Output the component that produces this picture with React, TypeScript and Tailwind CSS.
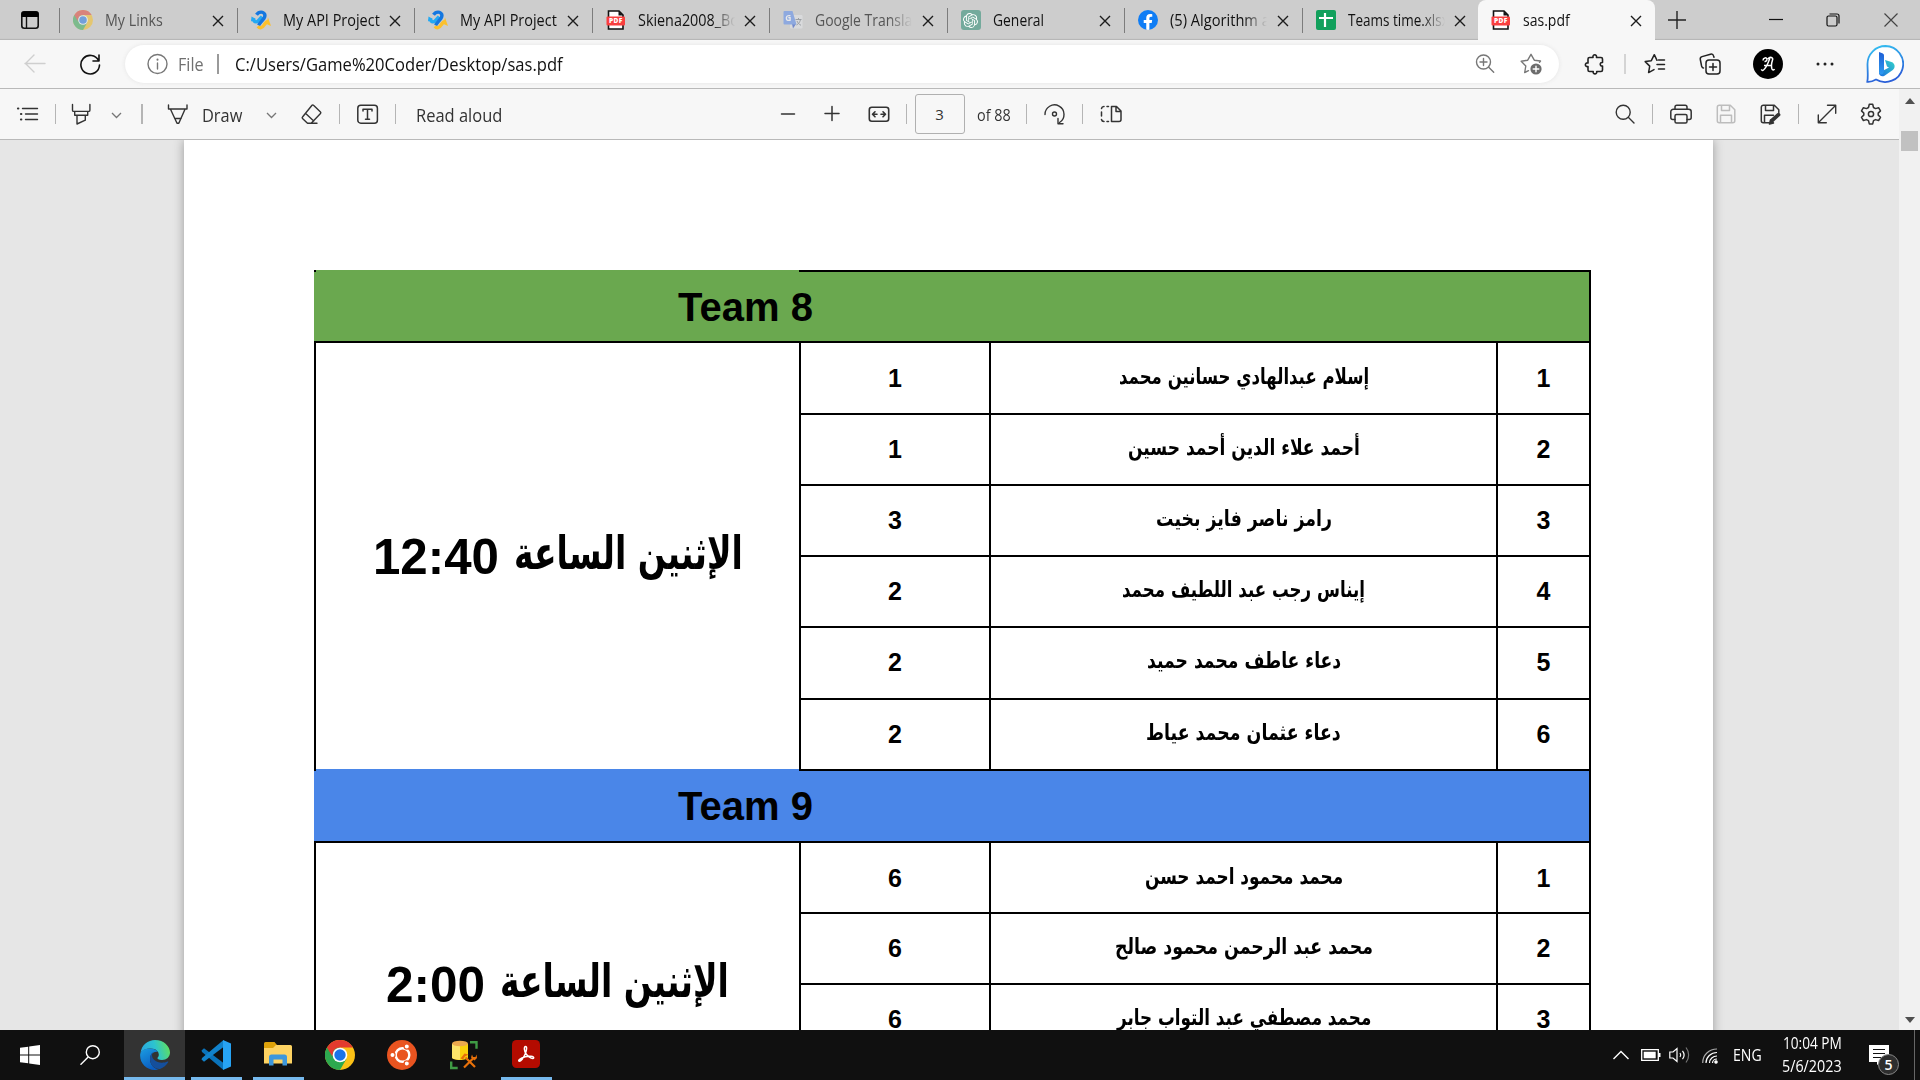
import React, { useLayoutEffect, useRef, useState, type ReactNode } from "react";
import { FaFacebookF } from "react-icons/fa";
import { SiOpenai } from "react-icons/si";

/** Text on one line, condensed or stretched to an exact advance width. */
function Fit({ w, className = "", children }: { w: number; className?: string; children: ReactNode }) {
  const ref = useRef<HTMLSpanElement>(null);
  const [k, setK] = useState(1);
  useLayoutEffect(() => {
    if (ref.current) setK(w / ref.current.offsetWidth);
  }, [w]);
  return (
    <span dir="ltr" className="block shrink-0" style={{ width: w }}>
      <span ref={ref} className={`block w-max origin-left whitespace-nowrap ${className}`} style={{ transform: `scaleX(${k})` }}>
        {children}
      </span>
    </span>
  );
}

function Ico({ children, className = "", sw = 1.3 }: { children: ReactNode; className?: string; sw?: number }) {
  return (
    <svg
      viewBox="0 0 24 24"
      fill="none"
      stroke="currentColor"
      strokeWidth={sw}
      strokeLinecap="round"
      strokeLinejoin="round"
      className={`size-6 shrink-0 ${className}`}
    >
      {children}
    </svg>
  );
}

const Sep = ({ className = "" }: { className?: string }) => <div className={`h-5 w-px shrink-0 bg-[#b5b5b5] ${className}`} />;

const Chevron = ({ className = "" }: { className?: string }) => (
  <svg viewBox="0 0 16 16" fill="none" stroke="#767676" strokeWidth="1.3" className={`size-4 shrink-0 ${className}`}>
    <path d="M3 7 7.500 11.500 12 7" />
  </svg>
);

/* ---------- favicons ---------- */

const ChromeLogo = ({ className = "" }: { className?: string }) => (
  <svg viewBox="0 0 30 30" className={className}>
    <circle cx="15" cy="15" r="15" fill="#fbc116" />
    <path d="M2 7.500A15 15 0 0 0 15 30l6.500-11.250L15 15z" fill="#2da94f" />
    <path d="M2 7.500 8.500 18.750 15 15V7.500z" fill="#2da94f" />
    <path d="M2 7.500A15 15 0 0 1 28 7.500H15a7.500 7.500 0 0 0-6.700 4.200L7.300 16.500z" fill="#e33b2e" />
    <circle cx="15" cy="15" r="7.300" fill="#fff" />
    <circle cx="15" cy="15" r="5.700" fill="#1a73e8" />
  </svg>
);

const ApiIcon = () => (
  <svg viewBox="0 0 20 20" fill="none" strokeWidth="3.400" className="size-5">
    <path d="M6.800 16.300c2.200 2.300 4.400 1.600 6.200-1.200 1.400-2.300 2.500-3.700 4.700-3.600" stroke="#fbc02d" />
    <path d="M17 7.500 20 16l-4.500-2z" fill="#fbc02d" />
    <path d="M2 9c1.500 3.600 4 3.700 6.200.8L11 6.500" stroke="#22a9f4" />
    <path d="M0 11.500.5 6.500 5 9z" fill="#22a9f4" />
    <path d="M5.500 4.800C8 1 12.500 1.500 13.800 4.500c.9 2.800-1.300 4.500-3.300 6.800-1.300 1.500-2.300 2.700-2.900 4" stroke="#1477e0" />
  </svg>
);

const PdfIcon = () => (
  <svg viewBox="0 0 20 20" className="size-5">
    <path d="M2.500 1h10.500l4 4v14h-14.500z" fill="#fff" stroke="#111" strokeWidth="1.600" />
    <path d="M12.500 1v4.500h4.500z" fill="#111" />
    <rect x="0.500" y="6.500" width="18.500" height="9" rx="1" fill="#f93f3f" />
    <text x="9.800" y="13.400" textAnchor="middle" fontFamily="Open Sans" fontWeight="800" fontSize="6.600" letterSpacing="0.300" fill="#fff">PDF</text>
  </svg>
);

const TranslateIcon = () => (
  <svg viewBox="0 0 20 20" className="size-5 opacity-55">
    <rect x="7" y="5" width="12.500" height="13.500" rx="1.200" fill="#e4e6ea" />
    <path d="m9 14 4 0-3 4.500z" fill="#2f55c8" />
    <path d="M1.500 1h8l4 13.500H1.500A1 1 0 0 1 .5 13.500V2a1 1 0 0 1 1-1z" fill="#5b8def" />
    <text x="2.300" y="10.500" fontFamily="Open Sans" fontWeight="700" fontSize="8.500" fill="#fff">G</text>
    <path d="M12.500 9.500h6M15.500 8v1.500M17.500 9.500c-.5 2.500-2 4.500-4 5.500M14 11c.8 2 2 3.200 4 4.300" stroke="#747a84" fill="none" />
  </svg>
);

const SheetsIcon = () => (
  <svg viewBox="0 0 20 20" className="size-5">
    <rect width="20" height="20" rx="2" fill="#12a05c" />
    <path d="M9 3v14M3 8h14" stroke="#fff" strokeWidth="2.200" />
  </svg>
);

const tabs: { icon: ReactNode; title: string; w: number; dim?: boolean }[] = [
  { icon: <ChromeLogo className="size-5 opacity-50" />, title: "My Links", w: 58, dim: true },
  { icon: <ApiIcon />, title: "My API Project", w: 97 },
  { icon: <ApiIcon />, title: "My API Project", w: 97 },
  { icon: <PdfIcon />, title: "Skiena2008_Bo", w: 101 },
  { icon: <TranslateIcon />, title: "Google Translate", w: 110, dim: true },
  {
    icon: (
      <div className="grid size-5 place-items-center rounded-[3px] bg-[#74aa9c] text-white">
        <SiOpenai size={15} />
      </div>
    ),
    title: "General",
    w: 51,
  },
  {
    icon: (
      <div className="flex size-5 items-end justify-center overflow-hidden rounded-full bg-[#0f7df5] text-white">
        <FaFacebookF size={16} />
      </div>
    ),
    title: "(5) Algorithm and",
    w: 118,
  },
  { icon: <SheetsIcon />, title: "Teams time.xlsx", w: 101 },
];

const CloseX = () => (
  <svg viewBox="0 0 12 12" className="size-3 shrink-0" stroke="#1c1c1c" strokeWidth="1.400">
    <path d="m1 1 10 10M11 1 1 11" />
  </svg>
);

function TabBar() {
  return (
    <div className="flex h-10 items-stretch bg-[#cdcdcd] shadow-[inset_0_-2px_1px_-1px_#b5b5b5]">
      <div className="ml-[18px] flex w-6 items-center">
        <svg viewBox="0 0 24 24" fill="none" className="size-6">
          <rect x="3.800" y="3.800" width="16.400" height="16.400" rx="2.500" stroke="#111" strokeWidth="1.600" />
          <path d="M3.500 5.500a2 2 0 0 1 2-2h13a2 2 0 0 1 2 2V9h-17z" fill="#000" />
          <path d="M8.500 9v11" stroke="#111" strokeWidth="1.400" />
        </svg>
      </div>
      <div className="ml-[17px] flex">
        {tabs.map((t, i) => (
          <div key={i} className="flex w-[177.500px] items-center">
            <div className="h-[25px] w-px bg-[#7c7c7c]" />
            <div className="ml-[13px] size-5 shrink-0">{t.icon}</div>
            <div className={`ml-3 w-[97px] overflow-hidden pb-px ${t.w > 98 ? "[mask-image:linear-gradient(to_right,black_76%,transparent_100%)]" : ""}`}>
              <Fit w={t.w} className={`text-[15.500px] leading-[22px] ${t.dim ? "text-[#555]" : "text-[#111]"}`}>{t.title}</Fit>
            </div>
            <div className="ml-[9.500px] pt-px"><CloseX /></div>
          </div>
        ))}
      </div>
      <div className="-ml-px flex w-[177px] items-center rounded-t-lg bg-[#f7f7f7]">
        <div className="ml-[13px] size-5"><PdfIcon /></div>
        <div className="ml-3 w-[97px] pb-px"><Fit w={47} className="text-[15.500px] leading-[22px] text-[#111]">sas.pdf</Fit></div>
        <div className="ml-[9.500px] pt-px"><CloseX /></div>
      </div>
      <svg viewBox="0 0 18 18" className="mt-[10.500px] ml-[13px] size-[18px]" stroke="#222" strokeWidth="1.400"><path d="M9 0v18M0 9h18" /></svg>
      <svg viewBox="0 0 14 14" className="mt-[13px] ml-[83px] size-[14px]" stroke="#111" strokeWidth="1.200"><path d="M0 6.500h14" /></svg>
      <svg viewBox="0 0 14 14" className="mt-[13px] ml-[43px] size-[14px]" fill="none" stroke="#111" strokeWidth="1.200">
        <rect x="1" y="3" width="10" height="10" rx="1.500" />
        <path d="M3.500 1H11a2 2 0 0 1 2 2v7.500" />
      </svg>
      <svg viewBox="0 0 14 14" className="mt-[13px] ml-[44px] size-[14px]" stroke="#444" strokeWidth="1.200"><path d="m.5.5 13 13M13.500.5l-13 13" /></svg>
    </div>
  );
}

function AddressBar() {
  return (
    <div className="flex h-[49px] items-center border-b border-[#b9b9b9] bg-[#f7f7f7] text-[#222]">
      <Ico className="ml-[23px] text-[#cfcfcf]" sw={1.400}><path d="M2 11.500h20M11 3 2.500 11.500l8.500 8.500" /></Ico>
      <Ico className="ml-[31px] text-[#111]" sw={1.600}><path d="M20.500 8.500A9.300 9.300 0 1 0 21.500 13M21 3v6h-6" /></Ico>
      <div className="ml-[23px] flex h-[38px] w-[1434px] items-center rounded-full bg-white shadow-[0_0_4px_#e4e4e4]">
        <Ico className="ml-[21px] text-[#777]" sw={1.400}>
          <circle cx="11.500" cy="12" r="9.500" /><path d="M11.500 11v6" /><path d="M11.500 7.500v.2" strokeWidth="2" />
        </Ico>
        <div className="ml-2 pb-px"><Fit w={26} className="text-[18px] leading-6 text-[#707070]">File</Fit></div>
        <div className="ml-[13px] h-5 w-[2px] bg-[#9a9a9a]" />
        <div className="ml-4 pb-px"><Fit w={328} className="text-[18px] leading-6 text-[#111]">C:/Users/Game%20Coder/Desktop/sas.pdf</Fit></div>
        <Ico className="ml-auto text-[#777]" sw={1.400}><circle cx="10.500" cy="10" r="7" /><path d="m15.700 15.300 5 5M7 10h7M10.500 6.500v7" /></Ico>
        <Ico className="mr-4 ml-[22px] text-[#777]" sw={1.400}>
          <path d="M20.500 10.200l1-1.200-6.200-.8L12 2.300 8.700 8.200 2.200 9.300l4.600 4.700L5.700 20.500 9.500 18.700" />
          <circle cx="17" cy="17" r="5.600" fill="#6c6c6c" stroke="none" />
          <path d="M17 14.200v5.600M14.200 17h5.600" stroke="#fff" />
        </Ico>
      </div>
      <Ico className="ml-6" sw={1.600}>
        <path d="M5 7a1.500 1.500 0 0 1 1.500-1.500H10c-.8-3.600 4.300-3.600 3.500 0H18a1.500 1.500 0 0 1 1.500 1.500v3.500c-3-.7-3 4.200 0 3.500V18a1.500 1.500 0 0 1-1.500 1.500h-4.300c.7 3.200-4.200 3.200-3.500 0H6.500A1.500 1.500 0 0 1 5 18v-3.500c-3.500.8-3.500-4.300 0-3.500z" />
      </Ico>
      <div className="ml-[17px] h-5 w-[2px] bg-[#d4d4d4]" />
      <Ico className="ml-[17px]" sw={1.500}>
        <path d="M14 8.300 11.300 2.700 8.300 8.700 2.200 9.600l4.500 4.500-1.100 6.500 5.400-3M15.500 8H21.500M14 12.500h7.500M15.500 17h6" />
      </Ico>
      <Ico className="ml-[31px]" sw={1.500}>
        <rect x="8" y="8" width="14" height="14" rx="3" /><path d="M15 11.500v7M11.500 15h7" />
        <path d="M5.500 16c-1.300 0-1.500-.8-1.900-2L2.300 7.500c-.3-1.600.4-2.500 1.700-2.900l8.500-2.400c1.500-.4 2.700.3 3.100 1.800l.4 1.300" />
      </Ico>
      <div className="ml-[31px] flex size-[30px] items-center justify-center rounded-full bg-black">
        <svg viewBox="0 0 16 16" className="size-4" fill="none" stroke="#fff" strokeWidth="1.500">
          <path d="M3 4.500C3 1.500 7 1 7 3.300S4.500 5.500 4.500 5.500M8 3c2-3 5.500-1.500 4.500 1-1 3-1.500 6-.5 9 .6 1.500 2 1 2.500 0M10 2C8.500 6 6.500 12 3.500 14c-1 .8-2 .3-2-.7M4 9.500h8" />
        </svg>
      </div>
      <svg viewBox="0 0 24 24" className="ml-[30px] size-6" fill="#222"><circle cx="5" cy="12" r="1.500" /><circle cx="12" cy="12" r="1.500" /><circle cx="19" cy="12" r="1.500" /></svg>
      <svg viewBox="0 0 38 38" className="ml-[29px] size-[38px]">
        <defs>
          <linearGradient id="bubble" x1="0" y1="0" x2="0.300" y2="1"><stop stopColor="#35c5f2" /><stop offset="1" stopColor="#2a5fd8" /></linearGradient>
          <linearGradient id="bstem" x1="0" y1="0" x2="0" y2="1"><stop stopColor="#1f5fd6" /><stop offset="1" stopColor="#2b9af0" /></linearGradient>
          <linearGradient id="bbowl" x1="1" y1="0" x2="0" y2="1"><stop stopColor="#33d3c8" /><stop offset="1" stopColor="#1b6fe0" /></linearGradient>
        </defs>
        <path d="M19.500 1A18 18 0 1 1 10 34.500C7 36.300 4 37 1.300 36.800 2.300 33 1.500 25 1.500 19A18 18 0 0 1 19.500 1z" fill="#fff" stroke="url(#bubble)" strokeWidth="1.800" />
        <path d="m19 15 6.500 2c3.500 1.200 4.300 5.800 1.300 8L18.500 30.800c-2.800 1.500-5.500-.3-5.500-3l10-5.300-2-1z" fill="url(#bbowl)" />
        <path d="m13 7 3.300 1.200c1.300.5 1.700 1.200 1.700 2.300v15c0 3-2 4.500-3.500 3.800-1-.5-1.500-1.300-1.500-2.300z" fill="url(#bstem)" />
      </svg>
    </div>
  );
}

function PdfToolbar() {
  return (
    <div className="flex h-[51px] items-center border-b border-[#b9b9b9] bg-[#f7f7f7] text-[#333]">
      <Ico className="ml-[15px]" sw={1.400}>
        <path d="M7.500 6.500H22.500M10.500 12H22.500M10.500 17.500H22.500" />
        <path d="M3 6.500h.3M6 12h.3M6 17.500h.3" strokeWidth="2.200" />
      </Ico>
      <Sep className="ml-4" />
      <Ico className="ml-[13px]" sw={1.400}><path d="M3.500 2.500v5.700c0 .8.400 1.200 1.200 1.200h15c.8 0 1.200-.4 1.200-1.200V2.500M5.700 9.500v3.800h13V9.500M8 13.500v8.500l8.300-3.800v-4.700" /></Ico>
      <Chevron className="ml-4" />
      <div className="ml-4 h-5 w-[2px] bg-[#b5b5b5]" />
      <Ico className="ml-[23px]" sw={1.400}><path d="M2.500 3v4h18.500V3M4.500 7.200 11 21.300h1.800L19 7.200M8.700 16.500h6.500" /></Ico>
      <div className="ml-3 pt-px"><Fit w={40} className="text-[18px] leading-6">Draw</Fit></div>
      <Chevron className="ml-[22px]" />
      <Ico className="ml-5" sw={1.400}><path d="m13.500 3.300 7 6.700a1 1 0 0 1 0 1.400L11.200 21.300H7.500l-5-4.900a1 1 0 0 1 0-1.400L12 3.300a1 1 0 0 1 1.500 0zM5.700 11.500l8 7.500M7.500 21.300h9.500" /></Ico>
      <Sep className="ml-[15px]" />
      <Ico className="ml-4" sw={1.500}><rect x="1.800" y="3.200" width="19.600" height="18" rx="3" /><path d="M7 9V7.200h9V9M11.500 7.200v10M9.500 17.200h4" /></Ico>
      <Sep className="ml-[15px]" />
      <div className="ml-5 pt-px"><Fit w={86} className="text-[18px] leading-6">Read aloud</Fit></div>

      <Ico className="ml-[274px]" sw={1.500}><path d="M5.500 12h13" /></Ico>
      <Ico className="ml-5" sw={1.500}><path d="M5 11.500h14M12 4.500v14" /></Ico>
      <Ico className="ml-[23px]" sw={1.600}><rect x="2.300" y="5.300" width="19.400" height="14" rx="2.500" /><path d="M10 12.300H5.800M8 9.800l-2.500 2.500L8 14.800M14 12.300h4.200M16 9.800l2.500 2.500-2.500 2.500" /></Ico>
      <Sep className="ml-[15px]" />
      <div className="ml-2 flex h-10 w-[50px] items-center justify-center rounded-[3px] border border-[#b0b0b0] pt-px pr-px text-[15px]">3</div>
      <div className="ml-3 pt-px"><Fit w={34} className="text-[16.500px] leading-6">of 88</Fit></div>
      <Sep className="ml-[15px]" />
      <Ico className="ml-4" sw={1.400}><path d="M2 12.500a9.500 9.500 0 1 1 14.500 8M15 16.500v5.300h5" /><circle cx="11.500" cy="12" r="2" /></Ico>
      <Sep className="ml-[15px]" />
      <Ico className="ml-4" sw={1.500}>
        <path d="M12.500 4.500h5l4.500 4.500v8.500a2 2 0 0 1-2 2h-7.500zM17 4.800v4.700h4.700" />
        <path d="M9.500 4.500H8M5 4.500a2.500 2.500 0 0 0-2.500 2M2.500 10v4M2.500 17.500a2.500 2.500 0 0 0 2.500 2M8 19.500h1.500" />
      </Ico>

      <Ico className="ml-[489.500px]" sw={1.400}><circle cx="10.200" cy="10.200" r="7" /><path d="m15.500 15.500 5.500 5.500" /></Ico>
      <Sep className="ml-[15.500px]" />
      <Ico className="ml-[15.500px]" sw={1.500}>
        <path d="M6 7V5a1.800 1.800 0 0 1 1.800-1.800h8.400A1.800 1.800 0 0 1 18 5v2M6 17.500H3.800a2 2 0 0 1-2-2V9.800a2.500 2.500 0 0 1 2.500-2.500h15.400a2.500 2.500 0 0 1 2.500 2.500v5.700a2 2 0 0 1-2 2H18" />
        <rect x="6" y="12.500" width="12" height="8.500" rx="1.500" />
      </Ico>
      <Ico className="ml-[21px] text-[#bdbdbd]" sw={1.500}>
        <path d="M3.300 5.300a2 2 0 0 1 2-2h11l4.500 4.500v11a2 2 0 0 1-2 2H5.300a2 2 0 0 1-2-2zM7.500 3.500v5h8v-5M6.500 20.500v-7.300h11v7.300" />
      </Ico>
      <Ico className="ml-5" sw={1.500}>
        <path d="M11 20.800H5.300a2 2 0 0 1-2-2V5.300a2 2 0 0 1 2-2h11l4.500 4.500v2.700M7.500 3.500v5h8v-5M6.500 20.500v-7.300h9" />
        <path d="m14 18.500 6.500-5.800" strokeWidth="3.800" /><path d="m11.500 22 1-4 3 3z" fill="currentColor" />
      </Ico>
      <Sep className="ml-4" />
      <Ico className="ml-4" sw={1.400}><path d="M3.500 20.500 20.500 3.500M12.500 3.300h8.200v8M3.300 13v7.700h8" /></Ico>
      <Ico className="ml-[20.500px]" sw={1.500}>
        <path d="M10.300 2.300h3.400l.8 3.200 2 1.100 3.100-.9 1.900 3.200-2.300 2.200v2l2.300 2.200-1.900 3.200-3.100-.9-2 1.100-.8 3.200h-3.400l-.8-3.200-2-1.100-3.100.9-1.900-3.200 2.300-2.200v-2L2.500 8.900l1.900-3.200 3.100.9 2-1.100z" />
        <circle cx="12" cy="12" r="2.600" />
      </Ico>
    </div>
  );
}

/* ---------- document ---------- */

type Row = { n: number; name: string; w: number; level: number };

const team8: Row[] = [
  { n: 1, name: "إسلام عبدالهادي حسانين محمد", w: 250, level: 1 },
  { n: 2, name: "أحمد علاء الدين أحمد حسين", w: 232, level: 1 },
  { n: 3, name: "رامز ناصر فايز بخيت", w: 176, level: 3 },
  { n: 4, name: "إيناس رجب عبد اللطيف محمد", w: 243, level: 2 },
  { n: 5, name: "دعاء عاطف محمد حميد", w: 194, level: 2 },
  { n: 6, name: "دعاء عثمان محمد عياط", w: 195, level: 2 },
];

const team9: Row[] = [
  { n: 1, name: "محمد محمود احمد حسن", w: 198, level: 6 },
  { n: 2, name: "محمد عبد الرحمن محمود صالح", w: 258, level: 6 },
  { n: 3, name: "محمد مصطفي عبد التواب جابر", w: 254, level: 6 },
];

function TeamHeader({ title, color }: { title: string; color: string }) {
  return (
    <div className={`flex ${color}`}>
      <div className="h-[2px] w-[2px] bg-black" />
      <div className="w-[483px]" />
      <div className="relative flex-1 border-t-2 border-r-2 border-black">
        <div className="absolute top-[11px] -left-[121px] text-[40px] leading-[48px] font-bold whitespace-nowrap">{title}</div>
      </div>
    </div>
  );
}

function Team({ rows, time, timeWidth, digitsWidth, sizes, timePad }: { rows: Row[]; time: string; timeWidth: number; digitsWidth: number; sizes: string; timePad: string }) {
  return (
    <div className="flex border-t-2 border-black">
      <div className={`flex w-[485px] justify-center border-l-2 border-black ${timePad}`}>
        <div className="flex h-[60px] items-start gap-[15px]">
          <Fit w={digitsWidth} className="text-[50px] leading-[60px] font-bold">{time}</Fit>
          <Fit w={timeWidth} className="font-['DejaVu_Sans'] text-[46px] leading-[53px] font-bold">
            <bdi dir="rtl">الإثنين الساعة</bdi>
          </Fit>
        </div>
      </div>
      <div className={`grid grid-cols-[190px_507px_95px] ${sizes}`}>
        {rows.map((r, i) => {
          const line = i > 0 ? "border-t-2" : "pt-[21px]";
          return (
            <React.Fragment key={r.n}>
              <div className={`border-l-2 border-black pt-5 text-center text-[25px] leading-[28px] font-bold ${line}`}>{r.level}</div>
              <div className={`flex justify-center border-l-2 border-black pt-5 ${line}`}>
                <Fit w={r.w} className="font-['DejaVu_Sans'] text-[22px] leading-[26px] font-bold">
                  <bdi dir="rtl">{r.name}</bdi>
                </Fit>
              </div>
              <div className={`border-x-2 border-black pt-5 text-center text-[25px] leading-[28px] font-bold ${line}`}>{r.n}</div>
            </React.Fragment>
          );
        })}
      </div>
    </div>
  );
}

function Document() {
  return (
    <div className="flex min-h-0 flex-1 justify-start overflow-hidden bg-[#e6e6e6] pl-[184px]">
      <div className="h-[1400px] w-[1529px] shrink-0 bg-white pt-[130px] pl-[130px] font-['Liberation_Sans'] text-black shadow-[0_0_10px_#9a9a9a]">
        <div className="w-[1277px]">
          <div className="grid h-[71px]"><TeamHeader title="Team 8" color="bg-[#6aa84f]" /></div>
          <Team rows={team8} time="12:40" timeWidth={229} digitsWidth={126} timePad="pt-[184px]" sizes="grid-rows-[70px_71px_71px_71px_72px_71px]" />
          <div className="grid h-[72px]"><TeamHeader title="Team 9" color="bg-[#4a86e8]" /></div>
          <Team rows={team9} time="2:00" timeWidth={229} digitsWidth={99} timePad="pt-[112px]" sizes="grid-rows-[69px_71px_71px]" />
        </div>
      </div>
    </div>
  );
}

/* ---------- taskbar ---------- */

const EdgeLogo = () => (
  <svg viewBox="0 0 30 30" className="size-[30px]">
    <defs>
      <linearGradient id="e1" x1="0" y1="0.500" x2="1" y2="0.300"><stop stopColor="#2aa5e0" /><stop offset="0.500" stopColor="#2cc3d0" /><stop offset="1" stopColor="#62e05a" /></linearGradient>
      <linearGradient id="e2" x1="0" y1="0" x2="0.500" y2="1"><stop stopColor="#1b9de2" /><stop offset="1" stopColor="#0a5cc0" /></linearGradient>
    </defs>
    <path d="M.5 13C1.500 5 8 0 15 0c9 0 15 6.500 15 12.500 0 4.500-3.500 7.500-8 7.500-3.500 0-5-1.300-4.500-2.200 1-1 1.300-2 1.300-3.300 0-3-3-6-8-6C6 8.500 2 10.500.5 13z" fill="url(#e1)" />
    <path d="M.2 14C1 10.500 5 8.500 10.500 8.500c3.500 0 6 1.500 7.500 3.500-4-1-8 2-8 7 0 6 4.500 10 9 10.500C8 32-.8 24 .2 14z" fill="url(#e2)" />
    <path d="M13 12c-2 1.500-3 4-3 7 0 6 5 10.500 10 10 3.500-1.200 6.500-4 8.200-6.700.4-.7-.2-1-.8-.7-1.500.8-3.500 1.200-5.500 1.200-6 0-9.900-4-9.900-7.500 0-1.200.3-2.300 1-3.300z" fill="#154f9c" />
  </svg>
);

const CodeLogo = () => (
  <svg viewBox="0 0 30 30" className="size-[30px]">
    <path d="m.5 10.500 2.500-2.200L22.500 23v7L1 12z" fill="#0a73bb" />
    <path d="m.5 19.500 2.500 2.200L22.500 7V0L1 18z" fill="#1182cb" />
    <path d="M22 0 30 3.500v23L22 30z" fill="#27a3f3" />
  </svg>
);

const FolderLogo = () => (
  <svg viewBox="0 0 28 28" className="size-7">
    <path d="M0 3.500A1.500 1.500 0 0 1 1.500 2h9l2.500 3v6H0z" fill="#dea20a" />
    <path d="M0 8h9l3-3h14.500A1.500 1.500 0 0 1 28 6.500v17H0z" fill="#fdd363" />
    <path d="M5 25.500V17a2.500 2.500 0 0 1 2.500-2.500h13A2.500 2.500 0 0 1 23 17v8.500h-4.500v-6h-9v6z" fill="#3d97dc" />
  </svg>
);

const UbuntuLogo = () => (
  <svg viewBox="0 0 30 30" className="size-[30px]">
    <circle cx="15" cy="15" r="15" fill="#e95420" />
    <circle cx="15.500" cy="15" r="6.800" fill="none" stroke="#fff" strokeWidth="2.400" />
    <g fill="#fff" stroke="#e95420" strokeWidth="1.200">
      <circle cx="5.500" cy="15" r="2.600" /><circle cx="19.800" cy="6.500" r="2.600" /><circle cx="19.800" cy="23.500" r="2.600" />
    </g>
  </svg>
);

const DbToolLogo = () => (
  <svg viewBox="0 0 30 30" className="size-[30px]">
    <path d="M3 4v13.500c0 1.500 3.500 2.500 8 2.500s8-1 8-2.500V4z" fill="#fbd20c" />
    <path d="M3 4v13.500c0 1 3 2.200 8 2.300V4z" fill="#fde46a" />
    <ellipse cx="11" cy="3.500" rx="8" ry="2.800" fill="#eda94e" />
    <path d="M21 2.200h6.500v6.500M2.200 21.500V28h6.500" fill="none" stroke="#3f9b45" strokeWidth="2.400" />
    <path d="m15 27.500 9.500-9.500M16.500 17.500l9.500 9.500" stroke="#e8710a" strokeWidth="2.200" />
    <path d="m11.500 18.500 4-5 4 1-3.500 2-2 3zM22 17.500l1-3 1 2.500h2.500l1-2.500.5 3.500-2.500 2.500z" fill="#e8710a" />
  </svg>
);

const AcrobatLogo = () => (
  <svg viewBox="0 0 28 28" className="size-7">
    <rect width="28" height="28" rx="4.500" fill="#b30b00" />
    <path d="M13.500 6.500c1.700 0 1.300 3.500-.3 7.500s-4.500 7.500-6 7.200c-1.800-.8 2-3.400 6-4.400s8.500-.6 8.500 1c0 1.800-4.500.2-7.200-3.300s-2.600-8-1-8z" fill="none" stroke="#fff" strokeWidth="1.500" />
  </svg>
);

function Task({ icon, bar = "", tile = "" }: { icon: ReactNode; bar?: string; tile?: string }) {
  return (
    <div className={`flex h-[50px] shrink-0 flex-col items-center ${tile || "w-[62px]"}`}>
      <div className="flex w-full flex-1 items-center justify-center">{icon}</div>
      <div className={`h-[3px] ${bar}`} />
    </div>
  );
}

function Taskbar() {
  return (
    <div className="flex h-[50px] shrink-0 items-center bg-[#101010] text-white">
      <svg viewBox="0 0 20 20" className="ml-5 size-5" fill="#fff"><path d="M0 2.800 8.200 1.700v7.800H0zM9.200 1.500 20 0v9.500H9.200zM0 10.500h8.200v7.800L0 17.200zM9.200 10.500H20V20L9.200 18.500z" /></svg>
      <svg viewBox="0 0 20 20" className="ml-10 size-5" fill="none" stroke="#fff" strokeWidth="1.400"><circle cx="12.800" cy="7.200" r="6.500" /><path d="M8.200 12 .5 19.700" /></svg>
      <div className="ml-6 flex">
        <Task icon={<div className="pt-[3px]"><EdgeLogo /></div>} tile="w-[61px] bg-[#333]" bar="w-full bg-[#76b9ed]" />
        <Task icon={<div className="pt-[3px]"><CodeLogo /></div>} bar="w-[51px] bg-[#76b9ed]" />
        <Task icon={<FolderLogo />} bar="w-[51px] bg-[#76b9ed]" />
        <Task icon={<div className="pt-[3px]"><ChromeLogo className="size-[30px]" /></div>} />
        <Task icon={<div className="pt-[3px]"><UbuntuLogo /></div>} />
        <Task icon={<div className="pt-[3px]"><DbToolLogo /></div>} />
        <Task icon={<AcrobatLogo />} bar="w-[51px] bg-[#76b9ed]" />
      </div>
      <svg viewBox="0 0 16 10" className="ml-auto h-[10px] w-4" fill="none" stroke="#fff" strokeWidth="1.400"><path d="m.5 9 7.500-7.500L15.500 9" /></svg>
      <svg viewBox="0 0 20 12" className="ml-3 h-3 w-5" fill="none" stroke="#fff" strokeWidth="1.300"><path d="M.7.700h16.600v10.600H.7z" /><path d="M18.500 4v4" strokeWidth="2" /><path d="M2.700 2.700h12v6.600h-12z" fill="#fff" stroke="none" /></svg>
      <svg viewBox="0 0 22 18" className="ml-2 h-[18px] w-[22px]" fill="none" stroke="#fff" strokeWidth="1.200">
        <path d="M.8 6h3.200l4-3.500v13L4 12H.8z" /><path d="M11 7c1 1.300 1 2.700 0 4M13.500 4.800c2 2.600 2 5.800 0 8.400" /><path d="M17 1.500c3.500 4.500 3.500 10.500 0 15" stroke="#777" />
      </svg>
      <svg viewBox="0 0 16 16" className="mt-[2px] ml-[11px] size-4" fill="none" stroke="#fff" strokeWidth="1.200">
        <path d="M.7 15C.7 7 7 1 15 1" stroke="#aaa" /><path d="M4 15C4 9 9 4.500 15 4.500M7.500 15c0-4 3.500-7 7.500-7M10.500 15c0-2.300 2-4 4.500-4" /><circle cx="14" cy="14" r="1.200" fill="#fff" />
      </svg>
      <div className="ml-[15px]"><Fit w={29} className="text-[16px] leading-6">ENG</Fit></div>
      <div className="ml-5 flex w-[60px] flex-col items-center pb-px">
        <Fit w={59} className="text-[15.500px] leading-[23px]">10:04 PM</Fit>
        <Fit w={60} className="text-[15.500px] leading-[23px]">5/6/2023</Fit>
      </div>
      <div className="relative ml-[27px] h-[30px] w-[30px]">
        <svg viewBox="0 0 20 20" className="mt-[5px] size-5"><path d="M0 0h20v17h-8l-4 3v-3H0z" fill="#fff" /><path d="M4 4.500h12M4 8.500h12M4 12.500h8" stroke="#101010" strokeWidth="1.200" /></svg>
        <div className="absolute top-[14px] left-[9px] flex size-[21px] items-center justify-center rounded-full border border-[#888] bg-[#2e2e2e] text-[14px] leading-none font-semibold">5</div>
      </div>
      <div className="ml-[15px] h-[50px] w-px bg-[#666]" />
      <div className="w-[5px]" />
    </div>
  );
}

export default function App() {
  return (
    <div className="flex h-[1080px] w-[1920px] flex-col overflow-hidden bg-[#e6e6e6] font-['Open_Sans',sans-serif]">
      <TabBar />
      <AddressBar />
      <div className="flex min-h-0 flex-1">
        <div className="flex min-w-0 flex-1 flex-col">
          <PdfToolbar />
          <Document />
        </div>
        <div className="flex w-[21px] flex-col items-center bg-[#f1f1f1]">
          <svg viewBox="0 0 10 6" className="mt-[9px] h-[6px] w-[10px]" fill="#505050"><path d="M5 0 10 6H0z" /></svg>
          <div className="mt-[27px] h-5 w-[17px] bg-[#c1c1c1]" />
          <svg viewBox="0 0 10 6" className="mt-auto mb-[7px] h-[6px] w-[10px]" fill="#505050"><path d="M0 0h10L5 6z" /></svg>
        </div>
      </div>
      <Taskbar />
    </div>
  );
}
